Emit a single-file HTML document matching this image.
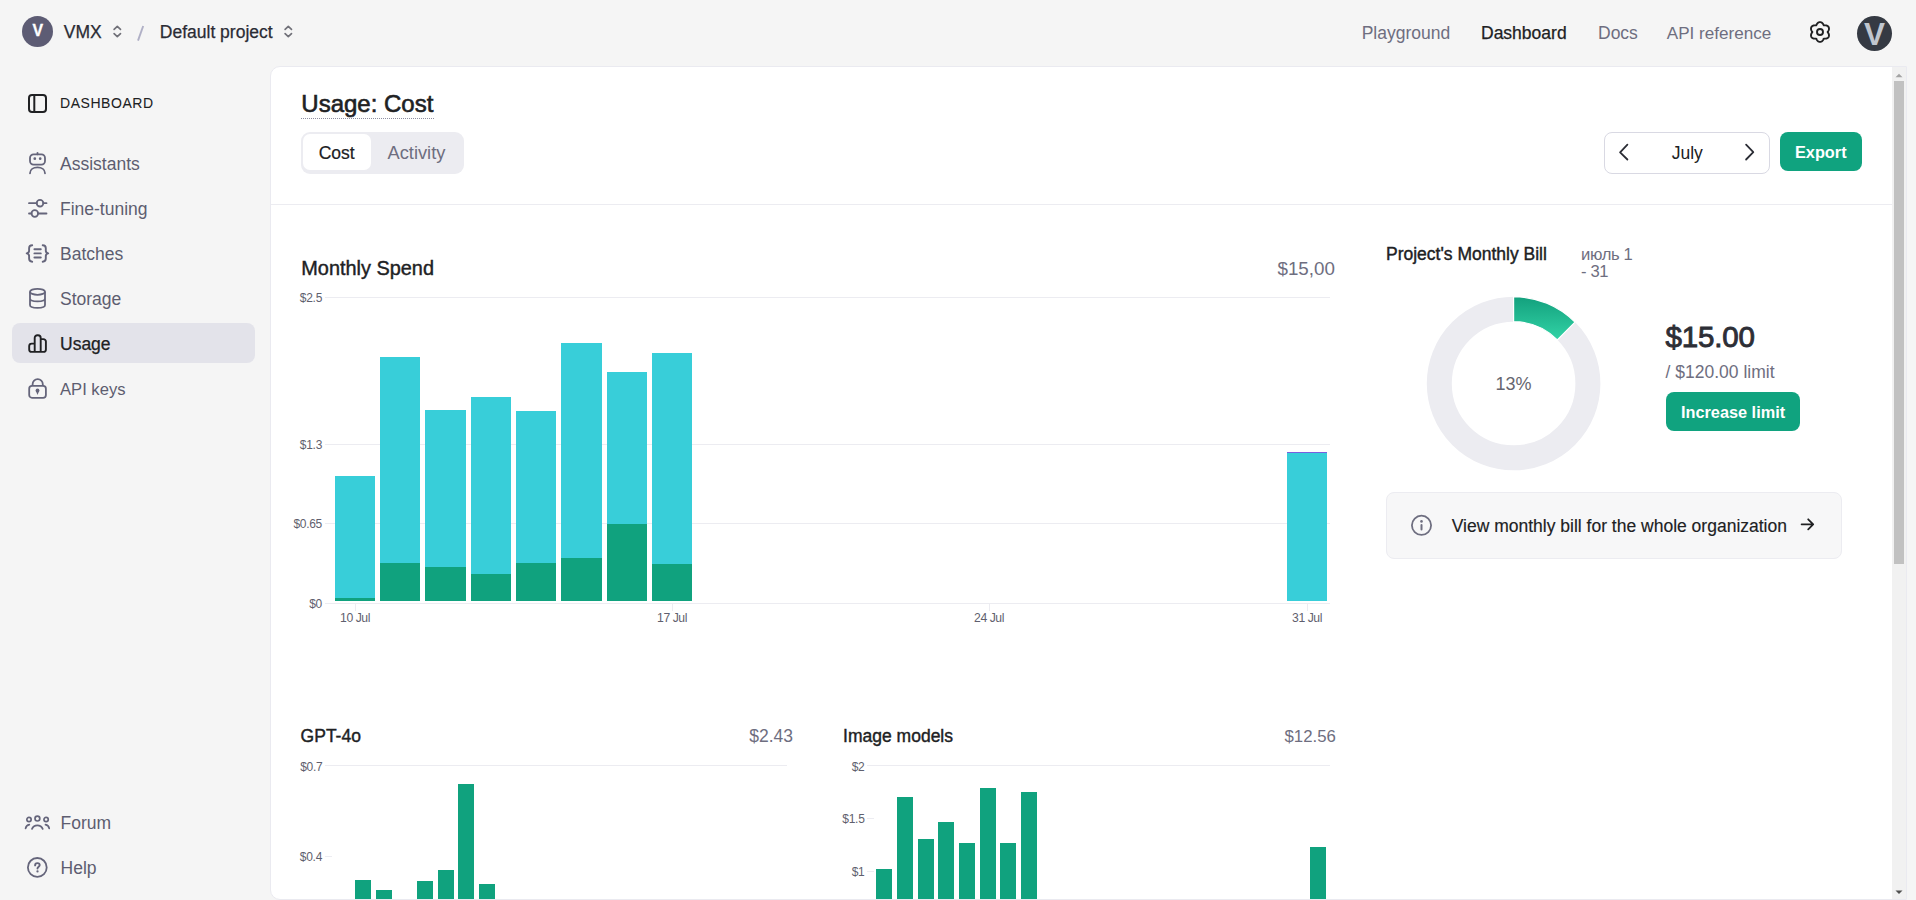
<!DOCTYPE html><html><head><meta charset="utf-8"><style>
html,body{margin:0;padding:0;width:1916px;height:900px;overflow:hidden;background:#f5f5f5;font-family:"Liberation Sans",sans-serif;}
.t{position:absolute;white-space:nowrap;}
svg{position:absolute;overflow:visible;}
</style></head><body>
<div style="position:absolute;left:22px;top:16px;width:31px;height:31px;border-radius:50%;background:#5d5c74;"></div>
<div class="t" style="left:-262.10px;width:600px;text-align:center;top:23.04px;font-size:15.9px;line-height:15.9px;color:#ffffff;font-weight:700;-webkit-text-stroke:0.3px #fff;">V</div>
<div class="t" style="left:63.80px;top:24.19px;font-size:17.5px;line-height:17.5px;color:#2a2b34;font-weight:400;-webkit-text-stroke:0.25px #2a2b34;">VMX</div>
<svg style="left:112.5px;top:25.3px" width="9" height="13" viewBox="0 0 9 13"><path d="M1.1 4.4 L4.3 1.3 L7.5 4.4 M1.1 8.6 L4.3 11.7 L7.5 8.6" fill="none" stroke="#707078" stroke-width="1.65" stroke-linecap="round" stroke-linejoin="round"/></svg>
<svg style="left:136px;top:25px" width="9" height="16" viewBox="0 0 9 16"><path d="M7.2 1.0 L2.0 15.6" stroke="#b0b0c6" stroke-width="1.9" stroke-linecap="butt"/></svg>
<div class="t" style="left:159.80px;top:24.19px;font-size:17.5px;line-height:17.5px;color:#2a2b34;font-weight:400;-webkit-text-stroke:0.25px #2a2b34;">Default project</div>
<svg style="left:284.2px;top:25.3px" width="9" height="13" viewBox="0 0 9 13"><path d="M1.1 4.4 L4.3 1.3 L7.5 4.4 M1.1 8.6 L4.3 11.7 L7.5 8.6" fill="none" stroke="#707078" stroke-width="1.65" stroke-linecap="round" stroke-linejoin="round"/></svg>
<div class="t" style="left:1361.70px;top:24.79px;font-size:17.5px;line-height:17.5px;color:#6e6e80;font-weight:400;">Playground</div>
<div class="t" style="left:1481.00px;top:24.79px;font-size:17.5px;line-height:17.5px;color:#202123;font-weight:400;-webkit-text-stroke:0.25px #202123;">Dashboard</div>
<div class="t" style="left:1598.00px;top:24.79px;font-size:17.5px;line-height:17.5px;color:#6e6e80;font-weight:400;">Docs</div>
<div class="t" style="left:1666.80px;top:25.12px;font-size:17.1px;line-height:17.1px;color:#6e6e80;font-weight:400;">API reference</div>
<svg style="left:1807.8px;top:19.7px" width="24" height="24" viewBox="0 0 24 24"><path d="M12.00 2.10 L12.26 2.11 L12.52 2.14 L12.77 2.20 L13.02 2.28 L13.27 2.37 L13.51 2.49 L13.74 2.63 L13.96 2.78 L14.17 2.96 L14.37 3.14 L14.56 3.34 L14.74 3.55 L14.91 3.77 L15.07 4.00 L15.21 4.24 L15.35 4.48 L15.47 4.72 L15.59 4.96 L15.69 5.20 L15.80 5.42 L16.04 5.40 L16.30 5.38 L16.57 5.35 L16.84 5.34 L17.11 5.34 L17.39 5.34 L17.67 5.36 L17.94 5.40 L18.22 5.45 L18.48 5.52 L18.75 5.60 L19.00 5.70 L19.25 5.81 L19.48 5.94 L19.70 6.09 L19.91 6.25 L20.10 6.43 L20.28 6.63 L20.43 6.83 L20.57 7.05 L20.69 7.28 L20.79 7.52 L20.87 7.77 L20.93 8.02 L20.97 8.28 L20.99 8.55 L20.98 8.82 L20.96 9.09 L20.92 9.36 L20.86 9.63 L20.78 9.89 L20.69 10.15 L20.58 10.41 L20.46 10.66 L20.33 10.90 L20.19 11.14 L20.04 11.37 L19.89 11.59 L19.74 11.80 L19.60 12.00 L19.74 12.20 L19.89 12.41 L20.04 12.63 L20.19 12.86 L20.33 13.10 L20.46 13.34 L20.58 13.59 L20.69 13.85 L20.78 14.11 L20.86 14.37 L20.92 14.64 L20.96 14.91 L20.98 15.18 L20.99 15.45 L20.97 15.72 L20.93 15.98 L20.87 16.23 L20.79 16.48 L20.69 16.72 L20.57 16.95 L20.43 17.17 L20.28 17.37 L20.10 17.57 L19.91 17.75 L19.70 17.91 L19.48 18.06 L19.25 18.19 L19.00 18.30 L18.75 18.40 L18.48 18.48 L18.22 18.55 L17.94 18.60 L17.67 18.64 L17.39 18.66 L17.11 18.66 L16.84 18.66 L16.57 18.65 L16.30 18.62 L16.04 18.60 L15.80 18.58 L15.69 18.80 L15.59 19.04 L15.47 19.28 L15.35 19.52 L15.21 19.76 L15.07 20.00 L14.91 20.23 L14.74 20.45 L14.56 20.66 L14.37 20.86 L14.17 21.04 L13.96 21.22 L13.74 21.37 L13.51 21.51 L13.27 21.63 L13.02 21.72 L12.77 21.80 L12.52 21.86 L12.26 21.89 L12.00 21.90 L11.74 21.89 L11.48 21.86 L11.23 21.80 L10.98 21.72 L10.73 21.63 L10.49 21.51 L10.26 21.37 L10.04 21.22 L9.83 21.04 L9.63 20.86 L9.44 20.66 L9.26 20.45 L9.09 20.23 L8.93 20.00 L8.79 19.76 L8.65 19.52 L8.53 19.28 L8.41 19.04 L8.31 18.80 L8.20 18.58 L7.96 18.60 L7.70 18.62 L7.43 18.65 L7.16 18.66 L6.89 18.66 L6.61 18.66 L6.33 18.64 L6.06 18.60 L5.78 18.55 L5.52 18.48 L5.25 18.40 L5.00 18.30 L4.75 18.19 L4.52 18.06 L4.30 17.91 L4.09 17.75 L3.90 17.57 L3.72 17.37 L3.57 17.17 L3.43 16.95 L3.31 16.72 L3.21 16.48 L3.13 16.23 L3.07 15.98 L3.03 15.72 L3.01 15.45 L3.02 15.18 L3.04 14.91 L3.08 14.64 L3.14 14.37 L3.22 14.11 L3.31 13.85 L3.42 13.59 L3.54 13.34 L3.67 13.10 L3.81 12.86 L3.96 12.63 L4.11 12.41 L4.26 12.20 L4.40 12.00 L4.26 11.80 L4.11 11.59 L3.96 11.37 L3.81 11.14 L3.67 10.90 L3.54 10.66 L3.42 10.41 L3.31 10.15 L3.22 9.89 L3.14 9.63 L3.08 9.36 L3.04 9.09 L3.02 8.82 L3.01 8.55 L3.03 8.28 L3.07 8.02 L3.13 7.77 L3.21 7.52 L3.31 7.28 L3.43 7.05 L3.57 6.83 L3.72 6.63 L3.90 6.43 L4.09 6.25 L4.30 6.09 L4.52 5.94 L4.75 5.81 L5.00 5.70 L5.25 5.60 L5.52 5.52 L5.78 5.45 L6.06 5.40 L6.33 5.36 L6.61 5.34 L6.89 5.34 L7.16 5.34 L7.43 5.35 L7.70 5.38 L7.96 5.40 L8.20 5.42 L8.31 5.20 L8.41 4.96 L8.53 4.72 L8.65 4.48 L8.79 4.24 L8.93 4.00 L9.09 3.77 L9.26 3.55 L9.44 3.34 L9.63 3.14 L9.83 2.96 L10.04 2.78 L10.26 2.63 L10.49 2.49 L10.73 2.37 L10.98 2.28 L11.23 2.20 L11.48 2.14 L11.74 2.11 Z" fill="none" stroke="#202123" stroke-width="1.9" stroke-linejoin="round"/><circle cx="12" cy="12" r="3" fill="none" stroke="#202123" stroke-width="1.9"/></svg>
<div style="position:absolute;left:1857px;top:15.5px;width:35px;height:35px;border-radius:50%;background:#353a43;"></div>
<div class="t" style="left:1574.40px;width:600px;text-align:center;top:18.54px;font-size:31.5px;line-height:31.5px;color:#c0c6cf;font-weight:700;">V</div>
<svg style="left:27px;top:93px" width="21" height="21" viewBox="0 0 21 21"><rect x="2" y="2" width="17" height="17" rx="3" fill="none" stroke="#202123" stroke-width="2"/><path d="M7.3 2 V19" stroke="#202123" stroke-width="2"/></svg>
<div class="t" style="left:60.00px;top:96.25px;font-size:14px;line-height:14px;color:#202123;font-weight:400;letter-spacing:0.55px;-webkit-text-stroke:0.05px #202123;">DASHBOARD</div>
<div style="position:absolute;left:12px;top:323px;width:243px;height:40px;background:#e3e3ea;border-radius:8px;"></div>
<div class="t" style="left:60.00px;top:156.09px;font-size:17.5px;line-height:17.5px;color:#5d5d70;font-weight:400;">Assistants</div>
<div class="t" style="left:60.00px;top:200.99px;font-size:17.5px;line-height:17.5px;color:#5d5d70;font-weight:400;">Fine-tuning</div>
<div class="t" style="left:60.00px;top:246.09px;font-size:17.5px;line-height:17.5px;color:#5d5d70;font-weight:400;">Batches</div>
<div class="t" style="left:60.00px;top:290.79px;font-size:17.5px;line-height:17.5px;color:#5d5d70;font-weight:400;">Storage</div>
<div class="t" style="left:60.00px;top:335.79px;font-size:17.5px;line-height:17.5px;color:#202123;font-weight:400;-webkit-text-stroke:0.25px #202123;">Usage</div>
<div class="t" style="left:60.00px;top:381.95px;font-size:16.6px;line-height:16.6px;color:#5d5d70;font-weight:400;">API keys</div>
<svg style="left:27px;top:151px" width="21" height="24" viewBox="0 0 21 24"><rect x="3" y="3.3" width="15" height="10.3" rx="3.6" fill="none" stroke="#65657b" stroke-width="1.8"/><path d="M10.5 1.8 V3.3" stroke="#65657b" stroke-width="1.8" stroke-linecap="round"/><circle cx="7.8" cy="7.7" r="1.35" fill="#65657b"/><circle cx="13.2" cy="7.7" r="1.35" fill="#65657b"/><path d="M3 22.3 C3 18.5 6.3 16.4 10.5 16.4 C14.7 16.4 18 18.5 18 22.3" fill="none" stroke="#65657b" stroke-width="1.8" stroke-linecap="round"/></svg>
<svg style="left:27px;top:198px" width="21" height="21" viewBox="0 0 21 21"><path d="M2 5.2 H9.7 M16.3 5.2 H19.5 M2 15.5 H4.5 M11.1 15.5 H19.5" stroke="#65657b" stroke-width="1.8" stroke-linecap="round"/><circle cx="13" cy="5.2" r="3.3" fill="none" stroke="#65657b" stroke-width="1.8"/><circle cx="7.8" cy="15.5" r="3.3" fill="none" stroke="#65657b" stroke-width="1.8"/></svg>
<svg style="left:25px;top:243px" width="25" height="21" viewBox="0 0 25 21"><path d="M7.2 2.2 C5 2.2 4.1 3.3 4.1 5.3 V7.8 C4.1 9.2 3.4 10.1 1.7 10.4 C3.4 10.7 4.1 11.6 4.1 13 V15.6 C4.1 17.6 5 18.7 7.2 18.7 M17.7 2.2 C19.9 2.2 20.8 3.3 20.8 5.3 V7.8 C20.8 9.2 21.5 10.1 23.2 10.4 C21.5 10.7 20.8 11.6 20.8 13 V15.6 C20.8 17.6 19.9 18.7 17.7 18.7" fill="none" stroke="#65657b" stroke-width="1.9" stroke-linecap="round" stroke-linejoin="round"/><path d="M9.4 6.3 H15.8 M9.4 10.4 H15.8 M9.4 14.5 H15.8" stroke="#65657b" stroke-width="1.9" stroke-linecap="round"/></svg>
<svg style="left:27px;top:287px" width="21" height="23" viewBox="0 0 21 23"><ellipse cx="10.5" cy="4.8" rx="7.5" ry="3" fill="none" stroke="#65657b" stroke-width="1.8"/><path d="M3 4.8 V18 C3 19.8 6.4 20.9 10.5 20.9 C14.6 20.9 18 19.8 18 18 V4.8 M3 11.5 C3 13.3 6.4 14.4 10.5 14.4 C14.6 14.4 18 13.3 18 11.5" fill="none" stroke="#65657b" stroke-width="1.8"/></svg>
<svg style="left:27px;top:333px" width="21" height="21" viewBox="0 0 21 21"><path d="M2.2 13.1 A2.5 2.5 0 0 1 4.7 10.6 H7.7 V4.9 A2.7 2.7 0 0 1 10.4 2.2 H11 A2.7 2.7 0 0 1 13.7 4.9 V6.1 H16.4 A2.5 2.5 0 0 1 18.9 8.6 V16.4 A2.5 2.5 0 0 1 16.4 18.9 H4.7 A2.5 2.5 0 0 1 2.2 16.4 Z M7.7 10.6 V18.9 M13.7 6.1 V18.9" fill="none" stroke="#202123" stroke-width="1.9" stroke-linejoin="round"/></svg>
<svg style="left:27px;top:377px" width="21" height="23" viewBox="0 0 21 23"><path d="M5.6 8.9 V7.2 A5.1 5.1 0 0 1 15.8 7.2 V8.9" fill="none" stroke="#65657b" stroke-width="1.8"/><rect x="2.2" y="8.9" width="16.7" height="11.9" rx="2.8" fill="none" stroke="#65657b" stroke-width="1.8"/><circle cx="10.5" cy="13.4" r="1.9" fill="#65657b"/><path d="M8.9 14 L10.5 17.9 L12.1 14 Z" fill="#65657b"/></svg>
<div class="t" style="left:60.60px;top:815.19px;font-size:17.5px;line-height:17.5px;color:#5d5d70;font-weight:400;">Forum</div>
<div class="t" style="left:60.60px;top:859.69px;font-size:17.5px;line-height:17.5px;color:#5d5d70;font-weight:400;">Help</div>
<svg style="left:24px;top:815px" width="27" height="17" viewBox="0 0 27 17"><circle cx="5" cy="4.5" r="2.15" fill="none" stroke="#65657b" stroke-width="1.7"/><circle cx="13.4" cy="3.6" r="2.4" fill="none" stroke="#65657b" stroke-width="1.7"/><circle cx="22.1" cy="4.5" r="2.15" fill="none" stroke="#65657b" stroke-width="1.7"/><path d="M8 13.9 A5.77 5.77 0 0 1 18.7 13.9 M1.6 13.4 A4.6 4.6 0 0 1 5.3 9.7 M25.2 13.4 A4.6 4.6 0 0 0 21.5 9.7" fill="none" stroke="#65657b" stroke-width="1.75" stroke-linecap="round"/></svg>
<svg style="left:26px;top:855.6px" width="23" height="23" viewBox="0 0 23 23"><circle cx="11.3" cy="11.4" r="9.4" fill="none" stroke="#65657b" stroke-width="1.8"/><path d="M9.1 9.4 C9.1 7.9 10.1 7.1 11.4 7.1 C12.8 7.1 13.7 7.9 13.7 9.1 C13.7 10.7 11.5 10.9 11.5 12.6" fill="none" stroke="#65657b" stroke-width="1.9" stroke-linecap="round"/><circle cx="11.5" cy="15.4" r="1.15" fill="#65657b"/></svg>
<div style="position:absolute;left:270px;top:66px;width:1635px;height:832px;background:#fff;border:1px solid #eaeaf0;border-radius:10px 0 0 10px;overflow:hidden;">
<div style="position:absolute;left:-271px;top:-67px;width:1916px;height:900px;">
<div class="t" style="left:301.30px;top:92.38px;font-size:24px;line-height:24px;color:#202123;font-weight:400;-webkit-text-stroke:0.6px #202123;">Usage: Cost</div>
<div style="position:absolute;left:301px;top:117.5px;width:133px;height:0;border-top:1.3px dotted #8e8ea0;"></div>
<div style="position:absolute;left:301px;top:132px;width:163px;height:42px;background:#ececf1;border-radius:9px;"></div>
<div style="position:absolute;left:303px;top:134px;width:68px;height:36px;background:#ffffff;border-radius:7px;"></div>
<div class="t" style="left:318.70px;top:144.99px;font-size:17.5px;line-height:17.5px;color:#202123;font-weight:400;-webkit-text-stroke:0.2px #202123;">Cost</div>
<div class="t" style="left:387.50px;top:144.31px;font-size:18.3px;line-height:18.3px;color:#6e6e80;font-weight:400;">Activity</div>
<div style="position:absolute;left:1604px;top:132px;width:164px;height:40px;border:1px solid #d9d9e3;border-radius:8px;background:#fff;"></div>
<svg style="left:1617px;top:142px" width="14" height="21" viewBox="0 0 14 21"><path d="M10.4 2.6 L3.1 10.3 L10.4 17.5" fill="none" stroke="#2b2d35" stroke-width="1.8" stroke-linecap="round" stroke-linejoin="round"/></svg>
<svg style="left:1742px;top:142px" width="14" height="21" viewBox="0 0 14 21"><path d="M4.1 2.7 L11.3 10.2 L4.1 17.5" fill="none" stroke="#2b2d35" stroke-width="1.8" stroke-linecap="round" stroke-linejoin="round"/></svg>
<div class="t" style="left:1671.70px;top:145.09px;font-size:17.5px;line-height:17.5px;color:#202123;font-weight:400;">July</div>
<div style="position:absolute;left:1780px;top:132px;width:82px;height:39px;background:#10a37f;border-radius:8px;"></div>
<div class="t" style="left:1795.00px;top:144.10px;font-size:16.3px;line-height:16.3px;color:#fff;font-weight:700;">Export</div>
<div style="position:absolute;left:271px;top:204px;width:1621px;height:1px;background:#ececf1;"></div>
<div class="t" style="left:301.30px;top:259.05px;font-size:19.9px;line-height:19.9px;color:#202123;font-weight:400;-webkit-text-stroke:0.4px #202123;">Monthly Spend</div>
<div class="t" style="right:581.10px;top:259.99px;font-size:18.8px;line-height:18.8px;color:#6e6e80;font-weight:400;">$15,00</div>
<div class="t" style="right:1594.00px;top:292.14px;font-size:12px;line-height:12px;color:#5f5f6e;font-weight:400;letter-spacing:-0.3px;">$2.5</div>
<div style="position:absolute;left:325px;top:297px;width:1005px;height:1px;background:#ececf1;"></div>
<div class="t" style="right:1594.00px;top:439.14px;font-size:12px;line-height:12px;color:#5f5f6e;font-weight:400;letter-spacing:-0.3px;">$1.3</div>
<div style="position:absolute;left:325px;top:444px;width:1005px;height:1px;background:#ececf1;"></div>
<div class="t" style="right:1594.00px;top:518.14px;font-size:12px;line-height:12px;color:#5f5f6e;font-weight:400;letter-spacing:-0.3px;">$0.65</div>
<div style="position:absolute;left:325px;top:523px;width:1005px;height:1px;background:#ececf1;"></div>
<div class="t" style="right:1594.00px;top:598.14px;font-size:12px;line-height:12px;color:#5f5f6e;font-weight:400;letter-spacing:-0.3px;">$0</div>
<div style="position:absolute;left:325px;top:603px;width:1005px;height:1px;background:#ececf1;"></div>
<div style="position:absolute;left:355px;top:604px;width:1px;height:7px;background:#ececf1;"></div>
<div class="t" style="left:55.00px;width:600px;text-align:center;top:611.87px;font-size:12.2px;line-height:12.2px;color:#5f5f6e;font-weight:400;letter-spacing:-0.45px;">10 Jul</div>
<div style="position:absolute;left:672px;top:604px;width:1px;height:7px;background:#ececf1;"></div>
<div class="t" style="left:372.00px;width:600px;text-align:center;top:611.87px;font-size:12.2px;line-height:12.2px;color:#5f5f6e;font-weight:400;letter-spacing:-0.45px;">17 Jul</div>
<div style="position:absolute;left:989px;top:604px;width:1px;height:7px;background:#ececf1;"></div>
<div class="t" style="left:689.00px;width:600px;text-align:center;top:611.87px;font-size:12.2px;line-height:12.2px;color:#5f5f6e;font-weight:400;letter-spacing:-0.45px;">24 Jul</div>
<div style="position:absolute;left:1307px;top:604px;width:1px;height:7px;background:#ececf1;"></div>
<div class="t" style="left:1007.00px;width:600px;text-align:center;top:611.87px;font-size:12.2px;line-height:12.2px;color:#5f5f6e;font-weight:400;letter-spacing:-0.45px;">31 Jul</div>
<div style="position:absolute;left:334.75px;top:475.5px;width:40.2px;height:125.50px;background:#38ced9;"></div>
<div style="position:absolute;left:334.75px;top:597.5px;width:40.2px;height:3.50px;background:#10a27e;"></div>
<div style="position:absolute;left:380.08px;top:356.9px;width:40.2px;height:244.10px;background:#38ced9;"></div>
<div style="position:absolute;left:380.08px;top:562.5px;width:40.2px;height:38.50px;background:#10a27e;"></div>
<div style="position:absolute;left:425.41px;top:409.9px;width:40.2px;height:191.10px;background:#38ced9;"></div>
<div style="position:absolute;left:425.41px;top:566.5px;width:40.2px;height:34.50px;background:#10a27e;"></div>
<div style="position:absolute;left:470.74px;top:397px;width:40.2px;height:204.00px;background:#38ced9;"></div>
<div style="position:absolute;left:470.74px;top:573.5px;width:40.2px;height:27.50px;background:#10a27e;"></div>
<div style="position:absolute;left:516.07px;top:411.1px;width:40.2px;height:189.90px;background:#38ced9;"></div>
<div style="position:absolute;left:516.07px;top:562.5px;width:40.2px;height:38.50px;background:#10a27e;"></div>
<div style="position:absolute;left:561.40px;top:343px;width:40.2px;height:258.00px;background:#38ced9;"></div>
<div style="position:absolute;left:561.40px;top:558.3px;width:40.2px;height:42.70px;background:#10a27e;"></div>
<div style="position:absolute;left:606.73px;top:372px;width:40.2px;height:229.00px;background:#38ced9;"></div>
<div style="position:absolute;left:606.73px;top:523.8px;width:40.2px;height:77.20px;background:#10a27e;"></div>
<div style="position:absolute;left:652.06px;top:353.2px;width:40.2px;height:247.80px;background:#38ced9;"></div>
<div style="position:absolute;left:652.06px;top:563.7px;width:40.2px;height:37.30px;background:#10a27e;"></div>
<div style="position:absolute;left:1287.1px;top:452.3px;width:39.8px;height:148.70px;background:#38ced9;border-top:1.6px solid #7a5fe0;box-sizing:border-box;"></div>
<div class="t" style="left:1386.00px;top:246.39px;font-size:17.5px;line-height:17.5px;color:#202123;font-weight:400;-webkit-text-stroke:0.4px #202123;">Project's Monthly Bill</div>
<div class="t" style="left:1581.00px;top:246.75px;font-size:16.6px;line-height:16.6px;color:#6e6e80;font-weight:400;letter-spacing:-0.35px;">июль 1</div>
<div class="t" style="left:1581.00px;top:263.75px;font-size:16.6px;line-height:16.6px;color:#6e6e80;font-weight:400;letter-spacing:-0.35px;">- 31</div>
<svg style="left:0;top:0" width="1916" height="900"><defs><linearGradient id="g1" x1="0" y1="0" x2="0" y2="1"><stop offset="0" stop-color="#13a07d"/><stop offset="1" stop-color="#32d3a6"/></linearGradient></defs><circle cx="1513.6" cy="383.5" r="74.3" fill="none" stroke="#ececf1" stroke-width="25.0"/><path d="M1513.6 296.7 A86.8 86.8 0 0 1 1574.98 322.12 L1557.30 339.80 A61.8 61.8 0 0 0 1513.6 321.7 Z" fill="url(#g1)" stroke="#fff" stroke-width="1.2"/></svg>
<div class="t" style="left:1213.60px;width:600px;text-align:center;top:375.06px;font-size:18px;line-height:18px;color:#666670;font-weight:400;">13%</div>
<div class="t" style="left:1665.60px;top:321.63px;font-size:29.5px;line-height:29.5px;color:#2d2e36;font-weight:400;letter-spacing:-0.2px;-webkit-text-stroke:0.9px #2d2e36;">$15.00</div>
<div class="t" style="left:1665.60px;top:364.39px;font-size:17.5px;line-height:17.5px;color:#6e6e80;font-weight:400;">/ $120.00 limit</div>
<div style="position:absolute;left:1666px;top:392px;width:134px;height:38.60000000000002px;background:#10a37f;border-radius:8px;"></div>
<div class="t" style="left:1681.00px;top:403.80px;font-size:16.3px;line-height:16.3px;color:#fff;font-weight:700;">Increase limit</div>
<div style="position:absolute;left:1386px;top:492px;width:454px;height:65px;background:#f7f7f8;border:1px solid #ececf1;border-radius:8px;"></div>
<svg style="left:1410px;top:514px" width="23" height="23" viewBox="0 0 23 23"><circle cx="11.5" cy="11.3" r="9.6" fill="none" stroke="#6e6e80" stroke-width="1.8"/><path d="M11.5 11 V15.6" stroke="#6e6e80" stroke-width="2" stroke-linecap="round"/><circle cx="11.5" cy="7.4" r="1.3" fill="#6e6e80"/></svg>
<div class="t" style="left:1451.70px;top:518.19px;font-size:17.5px;line-height:17.5px;color:#202123;font-weight:400;-webkit-text-stroke:0.15px #202123;">View monthly bill for the whole organization</div>
<svg style="left:1799px;top:516px" width="17" height="17" viewBox="0 0 17 17"><path d="M2.6 8.3 H14.2 M9.2 3.3 L14.2 8.3 L9.2 13.3" fill="none" stroke="#202123" stroke-width="1.8" stroke-linecap="round" stroke-linejoin="round"/></svg>
<div class="t" style="left:300.60px;top:728.49px;font-size:17.5px;line-height:17.5px;color:#202123;font-weight:400;-webkit-text-stroke:0.4px #202123;">GPT-4o</div>
<div class="t" style="right:1123.00px;top:728.49px;font-size:17.5px;line-height:17.5px;color:#6e6e80;font-weight:400;">$2.43</div>
<div class="t" style="right:1593.70px;top:761.14px;font-size:12px;line-height:12px;color:#5f5f6e;font-weight:400;letter-spacing:-0.3px;">$0.7</div>
<div style="position:absolute;left:325px;top:765px;width:462px;height:1px;background:#ececf1;"></div>
<div class="t" style="right:1594.00px;top:851.44px;font-size:12px;line-height:12px;color:#5f5f6e;font-weight:400;letter-spacing:-0.3px;">$0.4</div>
<div style="position:absolute;left:325px;top:856px;width:7px;height:1px;background:#ececf1;"></div>
<div style="position:absolute;left:355px;top:879.8px;width:16px;height:20.200000000000045px;background:#10a27e;"></div>
<div style="position:absolute;left:375.8px;top:890px;width:16.0px;height:10px;background:#10a27e;"></div>
<div style="position:absolute;left:417px;top:881px;width:16px;height:19px;background:#10a27e;"></div>
<div style="position:absolute;left:437.8px;top:870px;width:16.0px;height:30px;background:#10a27e;"></div>
<div style="position:absolute;left:458.4px;top:784px;width:16.0px;height:116px;background:#10a27e;"></div>
<div style="position:absolute;left:479.3px;top:883.5px;width:16.0px;height:16.5px;background:#10a27e;"></div>
<div class="t" style="left:843.10px;top:728.49px;font-size:17.5px;line-height:17.5px;color:#202123;font-weight:400;-webkit-text-stroke:0.4px #202123;">Image models</div>
<div class="t" style="right:580.20px;top:729.08px;font-size:16.8px;line-height:16.8px;color:#6e6e80;font-weight:400;">$12.56</div>
<div class="t" style="right:1051.50px;top:761.14px;font-size:12px;line-height:12px;color:#5f5f6e;font-weight:400;letter-spacing:-0.3px;">$2</div>
<div style="position:absolute;left:866.5px;top:765px;width:463.0999999999999px;height:1px;background:#ececf1;"></div>
<div class="t" style="right:1051.50px;top:813.44px;font-size:12px;line-height:12px;color:#5f5f6e;font-weight:400;letter-spacing:-0.3px;">$1.5</div>
<div style="position:absolute;left:866.5px;top:818px;width:7.5px;height:1px;background:#ececf1;"></div>
<div class="t" style="right:1051.50px;top:866.44px;font-size:12px;line-height:12px;color:#5f5f6e;font-weight:400;letter-spacing:-0.3px;">$1</div>
<div style="position:absolute;left:866.5px;top:871px;width:7.5px;height:1px;background:#ececf1;"></div>
<div style="position:absolute;left:876.4px;top:869.1px;width:16.0px;height:30.899999999999977px;background:#10a27e;"></div>
<div style="position:absolute;left:897px;top:796.7px;width:16px;height:103.29999999999995px;background:#10a27e;"></div>
<div style="position:absolute;left:917.8px;top:839px;width:16.0px;height:61px;background:#10a27e;"></div>
<div style="position:absolute;left:938.4px;top:822px;width:16.0px;height:78px;background:#10a27e;"></div>
<div style="position:absolute;left:959px;top:843.2px;width:16px;height:56.799999999999955px;background:#10a27e;"></div>
<div style="position:absolute;left:979.8px;top:788px;width:16.0px;height:112px;background:#10a27e;"></div>
<div style="position:absolute;left:1000.4px;top:843.2px;width:16.0px;height:56.799999999999955px;background:#10a27e;"></div>
<div style="position:absolute;left:1021px;top:792.2px;width:16px;height:107.79999999999995px;background:#10a27e;"></div>
<div style="position:absolute;left:1310.4px;top:847.4px;width:16.0px;height:52.60000000000002px;background:#10a27e;"></div>
</div>
<div style="position:absolute;right:0;top:0;width:14px;height:832px;background:#f1f1f1;"></div>
<svg style="left:1624px;top:5.5px" width="8" height="5" viewBox="0 0 8 5"><path d="M0.5 4.2 L4 0.7 L7.5 4.2 Z" fill="#a3a3a3"/></svg>
<div style="position:absolute;left:1623px;top:14px;width:10px;height:483px;background:#c1c1c1;"></div>
<svg style="left:1624px;top:822.5px" width="8" height="5" viewBox="0 0 8 5"><path d="M0.5 0.6 L7.5 0.6 L4 4.1 Z" fill="#505050"/></svg>
</div>
</body></html>
